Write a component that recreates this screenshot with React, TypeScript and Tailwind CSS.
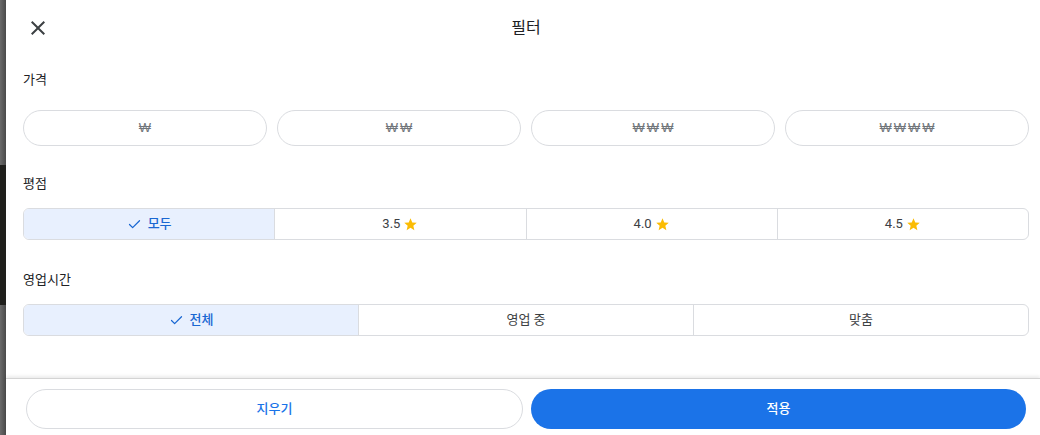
import { Check } from 'lucide-react';

const font = { fontFamily: 'Roboto, "Noto Sans CJK KR", sans-serif' };

function Star() {
  return (
    <svg viewBox="0 0 24 24" className="w-[15px] h-[15px] ml-[3px]" fill="#fbbc04">
      <path d="M12 17.27 18.18 21l-1.64-7.03L22 9.24l-7.19-.61L12 2 9.19 8.63 2 9.24l5.46 4.73L5.82 21z" />
    </svg>
  );
}

function Segmented({ items }: { items: { label: string; star?: boolean; selected?: boolean }[] }) {
  return (
    <div className="flex h-[32px] border border-[#dadce0] rounded-[6px] overflow-hidden">
      {items.map((it, i) => (
        <div
          key={it.label}
          className={
            'flex-1 flex items-center justify-center text-[13px] ' +
            (i > 0 ? 'border-l border-[#dadce0] ' : '') +
            (it.selected ? 'bg-[#e8f0fe] text-[#1967d2] font-medium' : 'text-[#3c4043]')
          }
        >
          {it.selected && <Check className="w-[15px] h-[15px] mr-[6px]" strokeWidth={2} />}
          <span>{it.label}</span>
          {it.star && <Star />}
        </div>
      ))}
    </div>
  );
}

export default function App() {
  const prices = ['₩', '₩₩', '₩₩₩', '₩₩₩₩'];
  return (
    <div className="flex w-[1040px] h-[435px] overflow-hidden bg-white" style={font}>
      <div className="w-[6px] flex flex-col shrink-0">
        <div className="h-[165px] bg-gradient-to-r from-[#6a6a6a] to-[#4a4a4a]" />
        <div className="h-[140px] bg-[#1f1f1c]" />
        <div className="flex-1 bg-gradient-to-r from-[#6a6a6a] to-[#4a4a4a]" />
      </div>
      <div className="flex-1 flex flex-col">
        <div className="flex-1 pl-[17px] pr-[11px]">
          <div className="h-[56px] flex items-center relative">
            <svg viewBox="0 0 24 24" className="w-[24px] h-[24px] ml-[3px]" fill="#3c4043">
              <path d="M19 6.41 17.59 5 12 10.59 6.41 5 5 6.41 10.59 12 5 17.59 6.41 19 12 13.41 17.59 19 19 17.59 13.41 12z" />
            </svg>
            <div className="absolute left-0 right-0 text-center text-[16px] text-[#202124] pointer-events-none">
              필터
            </div>
          </div>

          <div className="mt-[14px] h-[20px] flex items-center text-[13px] text-[#202124]">가격</div>
          <div className="mt-[20px] grid grid-cols-4 gap-[10px]">
            {prices.map((p) => (
              <div
                key={p}
                className="h-[36px] rounded-full border border-[#dadce0] flex items-center justify-center text-[13px] text-[#70757a] tracking-[2px] pl-[2px]"
                style={{ fontFamily: '"Liberation Sans", sans-serif' }}
              >
                {p}
              </div>
            ))}
          </div>

          <div className="mt-[28px] h-[20px] flex items-center text-[13px] text-[#202124]">평점</div>
          <div className="mt-[14px]">
            <Segmented
              items={[
                { label: '모두', selected: true },
                { label: '3.5', star: true },
                { label: '4.0', star: true },
                { label: '4.5', star: true },
              ]}
            />
          </div>

          <div className="mt-[30px] h-[20px] flex items-center text-[13px] text-[#202124]">영업시간</div>
          <div className="mt-[14px]">
            <Segmented
              items={[
                { label: '전체', selected: true },
                { label: '영업 중' },
                { label: '맞춤' },
              ]}
            />
          </div>
        </div>

        <div className="h-[57px] shrink-0 border-t border-[#d4d4d4] shadow-[0_-2px_3px_rgba(0,0,0,0.08)] pl-[20px] pr-[14px] pt-[10px] flex gap-[8px]">
          <button className="flex-1 h-[40px] rounded-full border border-[#dadce0] bg-white text-[13px] font-medium text-[#1a73e8]">
            지우기
          </button>
          <button className="flex-1 h-[40px] rounded-full bg-[#1b73e8] text-[13px] font-medium text-white">
            적용
          </button>
        </div>
      </div>
    </div>
  );
}
